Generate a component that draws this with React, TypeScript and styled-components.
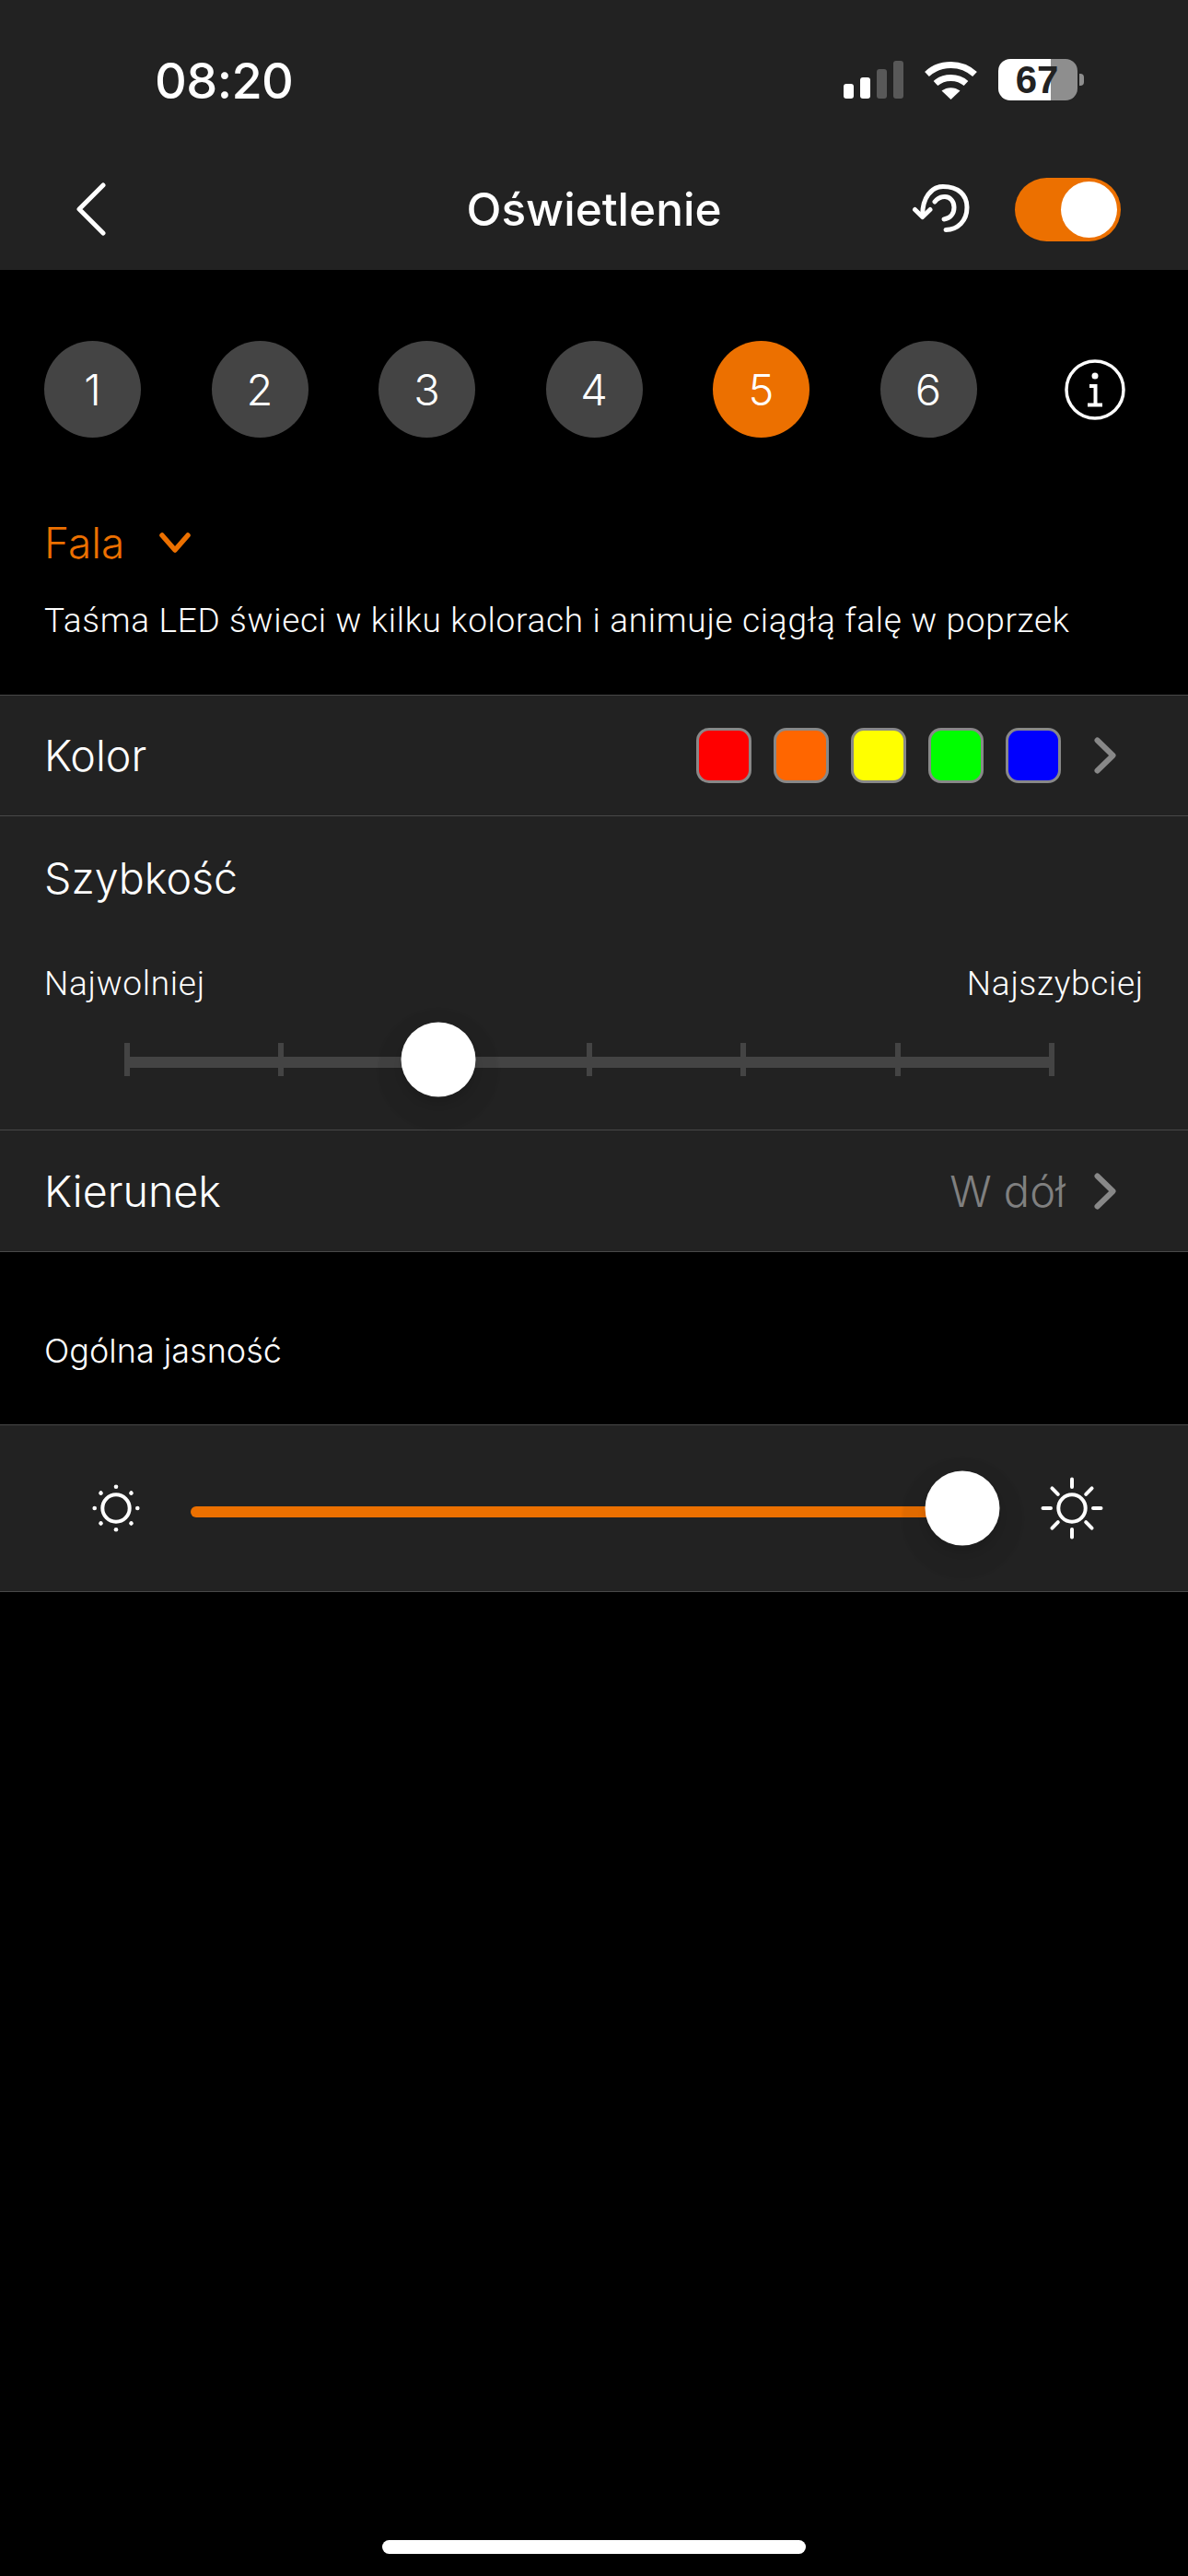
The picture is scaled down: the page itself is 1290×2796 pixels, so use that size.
import React from "react";
import styled, { createGlobalStyle } from "styled-components";

const Global = createGlobalStyle`
  html, body { margin: 0; padding: 0; background: #000; }
  body { font-family: "Inter", "Liberation Sans", sans-serif; color: #fff; }
  * { box-sizing: border-box; }
`;

const Page = styled.div`
  width: 1290px;
  height: 2796px;
  background: #000;
  display: flex;
  flex-direction: column;
  position: relative;
  overflow: hidden;
`;

const Header = styled.header`
  height: 293px;
  flex: none;
  background: #222222;
  display: flex;
  flex-direction: column;
`;

const StatusBar = styled.div`
  height: 173px;
  flex: none;
  display: flex;
  align-items: flex-start;
  justify-content: space-between;
  padding: 60px 113px 0 168px;
`;

const Clock = styled.div`
  font-size: 54px;
  line-height: 54px;
  font-weight: 500;
  margin-top: 1px;
  letter-spacing: -0.6px;
`;

const StatusIcons = styled.div`
  display: flex;
  align-items: center;
  gap: 23px;
  margin-top: 4px;
`;

const Nav = styled.div`
  height: 108px;
  display: flex;
  align-items: center;
  justify-content: space-between;
  padding: 0 73px 0 82px;
  position: relative;
`;

const Title = styled.h1`
  position: absolute;
  left: 0;
  right: 0;
  margin: 0;
  text-align: center;
  font-size: 49.5px;
  font-weight: 500;
  line-height: 54px;
`;

const NavRight = styled.div`
  display: flex;
  align-items: center;
  gap: 48px;
`;

const Toggle = styled.div`
  width: 115px;
  height: 69px;
  border-radius: 35px;
  background: #ec7000;
  display: flex;
  align-items: center;
  justify-content: flex-end;
  padding-right: 4px;
`;

const Knob = styled.div`
  width: 61px;
  height: 61px;
  border-radius: 50%;
  background: #fff;
`;

const Presets = styled.div`
  height: 189px;
  flex: none;
  margin-top: 77px;
  padding: 0 48px;
  display: flex;
  align-items: flex-start;
  justify-content: space-between;
`;

const Preset = styled.div<{ $active?: boolean }>`
  width: 105px;
  height: 105px;
  border-radius: 50%;
  background: ${(p) => (p.$active ? "#ec7000" : "#444444")};
  display: flex;
  align-items: center;
  justify-content: center;
  font-size: 47px;
  font-weight: 300;
`;

const InfoSlot = styled.div`
  width: 105px;
  height: 105px;
  display: flex;
  align-items: center;
  justify-content: center;
  transform: translateX(-1px);
`;

const Mode = styled.div`
  display: flex;
  align-items: center;
  gap: 38px;
  padding: 0 48px;
  height: 60px;
  flex: none;
  color: #ec7000;
  font-size: 46px;
  font-weight: 300;
`;

const Description = styled.p`
  margin: 30px 0 0;
  padding: 0 48px;
  flex: none;
  font-family: "Roboto", sans-serif;
  font-size: 37px;
  line-height: 50px;
  font-weight: 300;
  letter-spacing: 0.7px;
  height: 105px;
  white-space: nowrap;
`;

const Panel = styled.section`
  flex: none;
  background: #222222;
  border-top: 1px solid #484848;
  border-bottom: 1px solid #484848;
`;

const Row = styled.div<{ $h: number }>`
  height: ${(p) => p.$h}px;
  display: flex;
  align-items: center;
  justify-content: space-between;
  padding: 0 78px 0 48px;
`;

const Divider = styled.div`
  height: 1px;
  background: #484848;
`;

const RowLabel = styled.div`
  font-size: 46.6px;
  font-weight: 300;
`;

const RowValue = styled.div`
  display: flex;
  align-items: center;
  gap: 31px;
  color: #808080;
  font-size: 47px;
  font-weight: 300;
`;

const Swatches = styled.div`
  display: flex;
  align-items: center;
  gap: 24px;
  margin-right: 5px;
`;

const Swatch = styled.div<{ $c: string }>`
  width: 60px;
  height: 60px;
  border-radius: 14px;
  background: ${(p) => p.$c};
  border: 3px solid #888888;
`;

const SpeedBlock = styled.div`
  height: 340px;
  padding: 0 48px;
  display: flex;
  flex-direction: column;
`;

const SpeedTitle = styled(RowLabel)`
  margin-top: 40px;
  line-height: 54px;
`;

const SpeedEnds = styled.div`
  display: flex;
  justify-content: space-between;
  margin-top: 66px;
  font-family: "Roboto", sans-serif;
  font-size: 37px;
  line-height: 44px;
  font-weight: 300;
  letter-spacing: 0.7px;
`;

const StepTrack = styled.div`
  position: relative;
  height: 36px;
  margin: 42px 97px 0 87px;
  display: flex;
  align-items: center;
  justify-content: space-between;
  &::before {
    content: "";
    position: absolute;
    left: 0;
    right: 0;
    top: 15px;
    height: 12px;
    background: #444;
  }
`;

const Tick = styled.div`
  width: 6px;
  height: 36px;
  background: #444;
  position: relative;
`;

const Thumb = styled.div<{ $lift: number }>`
  position: absolute;
  width: 81px;
  height: 81px;
  border-radius: 50%;
  background: #fff;
  top: calc(50% - ${(p) => p.$lift}px);
  transform: translate(-50%, -50%);
  box-shadow:
    0 8px 8px rgba(0, 0, 0, 0.1),
    0 11px 3px 25px rgba(0, 0, 0, 0.05);
  z-index: 1;
`;

const Section = styled.div`
  height: 187px;
  flex: none;
  padding: 26px 48px 0;
  display: flex;
  align-items: center;
  font-size: 36px;
  font-weight: 300;
`;

const BrightnessRow = styled.div`
  height: 180px;
  display: flex;
  align-items: center;
  padding: 0 92px 0 100px;
`;

const BrightTrack = styled.div`
  position: relative;
  flex: 1;
  height: 12px;
  margin: 7px 85px 0 55px;
  background: #ec7000;
  border-radius: 6px 0 0 6px;
`;

const HomeIndicator = styled.div`
  position: absolute;
  left: 415px;
  bottom: 24px;
  width: 460px;
  height: 15px;
  border-radius: 8px;
  background: #fff;
`;

const BatteryGroup = styled.div`
  display: flex;
  align-items: center;
  gap: 2px;
`;

const BatteryBody = styled.div`
  width: 86px;
  height: 45px;
  border-radius: 13px;
  background: linear-gradient(to right, #fff 0 66.3%, #8e8e8e 66.3% 100%);
  color: #222222;
  font: 700 42px/45px "Liberation Sans", sans-serif;
  text-align: center;
  padding-right: 2px;
`;

const BatteryCap = styled.div`
  width: 5px;
  height: 13px;
  border-radius: 0 4px 4px 0;
  background: #8e8e8e;
`;

const Signal = () => (
  <svg width="65" height="41" viewBox="0 0 65 41">
    <rect x="0" y="25" width="11" height="16" rx="3" fill="#fff" />
    <rect x="18" y="18" width="11" height="23" rx="3" fill="#fff" />
    <rect x="36" y="9" width="11" height="32" rx="3" fill="#585858" />
    <rect x="54" y="0" width="11" height="41" rx="3" fill="#585858" />
  </svg>
);

const Wifi = () => (
  <svg width="57" height="42" viewBox="0 0 57 42" fill="none" stroke="#fff" strokeWidth="7">
    <path d="M2.5 14.5 C17 1 40 1 54.5 14.5" />
    <path d="M12 24.5 C21 16.5 36 16.5 45 24.5" />
    <path d="M28.5 42 L18.5 32.5 C24.5 28 32.5 28 38.5 32.5 Z" fill="#fff" stroke="none" />
  </svg>
);

const Info = () => (
  <svg width="66" height="66" viewBox="0 0 66 66" fill="none" stroke="#fff" strokeLinecap="round">
    <circle cx="33" cy="33" r="31" strokeWidth="3.5" />
    <circle cx="33" cy="18" r="3.5" fill="#fff" stroke="none" />
    <path d="M27 29 H33.5 V48 M25 49.5 H41" strokeWidth="4" strokeLinecap="butt" />
  </svg>
);

const Reset = () => (
  <svg width="64" height="56" viewBox="0 0 64 56" fill="none" stroke="#fff" strokeWidth="5" strokeLinecap="round" strokeLinejoin="round">
    <path d="M11.7 34 C11.7 16 21 3.5 34 3.5 C50 3.5 60 12 60 26 C60 41 50 50 37 50.5" />
    <path d="M25 20 C28 16 32 14.5 36 14.5 C42 14.5 46 20 46 26 C46 33 42 38 35 39" />
    <path d="M3.5 28.5 L11.7 36.5 L20 28.5" />
  </svg>
);

const SUN_ANGLES = [0, 45, 90, 135, 180, 225, 270, 315];

const SmallSun = () => (
  <svg width="52" height="52" viewBox="-26 -26 52 52" stroke="#fff" fill="none">
    <circle r="14.7" strokeWidth="4" />
    {SUN_ANGLES.map((a) => (
      <circle key={a} cx="0" cy="-23.3" r="2.3" fill="#fff" stroke="none" transform={`rotate(${a})`} />
    ))}
  </svg>
);

const BigSun = () => (
  <svg width="68" height="68" viewBox="-34 -34 68 68" stroke="#fff" fill="none" strokeLinecap="round">
    <circle r="14.7" strokeWidth="4" />
    {SUN_ANGLES.map((a) => (
      <line key={a} x1="0" y1={a % 90 === 0 ? -23 : -21.5} x2="0" y2={a % 90 === 0 ? -31.5 : -30.5} strokeWidth="4" transform={`rotate(${a})`} />
    ))}
  </svg>
);

const ChevronRight = () => (
  <svg width="24" height="40" viewBox="0 0 24 40" fill="none" stroke="#888888" strokeWidth="6" strokeLinecap="round" strokeLinejoin="round">
    <path d="M3.5 3.5 L20.5 20 L3.5 36.5" />
  </svg>
);

export default function App() {
  return (
    <Page>
      <Global />
      <Header>
        <StatusBar>
          <Clock>08:20</Clock>
          <StatusIcons>
            <Signal />
            <Wifi />
            <BatteryGroup>
              <BatteryBody>67</BatteryBody>
              <BatteryCap />
            </BatteryGroup>
          </StatusIcons>
        </StatusBar>
        <Nav>
          <svg width="34" height="58" viewBox="0 0 34 58" fill="none" stroke="#fff" strokeWidth="5" strokeLinecap="round" strokeLinejoin="round">
            <path d="M30 3 L4 29 L30 55" />
          </svg>
          <Title>Oświetlenie</Title>
          <NavRight>
            <Reset />
            <Toggle>
              <Knob />
            </Toggle>
          </NavRight>
        </Nav>
      </Header>

      <Presets>
        {[1, 2, 3, 4, 5, 6].map((n) => (
          <Preset key={n} $active={n === 5}>
            {n}
          </Preset>
        ))}
        <InfoSlot>
          <Info />
        </InfoSlot>
      </Presets>

      <Mode>
        Fala
        <svg width="34" height="22" viewBox="0 0 34 22" fill="none" stroke="#ec7000" strokeWidth="5.5" strokeLinecap="round" strokeLinejoin="round">
          <path d="M3 3 L17 19 L31 3" />
        </svg>
      </Mode>
      <Description>Taśma LED świeci w kilku kolorach i animuje ciągłą falę w poprzek</Description>

      <Panel>
        <Row $h={130}>
          <RowLabel>Kolor</RowLabel>
          <RowValue>
            <Swatches>
              {["#ff0000", "#ff6600", "#ffff00", "#00ff00", "#0000ff"].map((c) => (
                <Swatch key={c} $c={c} />
              ))}
            </Swatches>
            <ChevronRight />
          </RowValue>
        </Row>
        <Divider />
        <SpeedBlock>
          <SpeedTitle>Szybkość</SpeedTitle>
          <SpeedEnds>
            <span>Najwolniej</span>
            <span>Najszybciej</span>
          </SpeedEnds>
          <StepTrack>
            {[0, 1, 2, 3, 4, 5, 6].map((i) => (
              <Tick key={i} />
            ))}
            <Thumb $lift={0.5} style={{ left: "33.75%" }} />
          </StepTrack>
        </SpeedBlock>
        <Divider />
        <Row $h={131}>
          <RowLabel>Kierunek</RowLabel>
          <RowValue>
            W dół
            <ChevronRight />
          </RowValue>
        </Row>
      </Panel>

      <Section>Ogólna jasność</Section>

      <Panel>
        <BrightnessRow>
          <SmallSun />
          <BrightTrack>
            <Thumb $lift={3.5} style={{ left: "100%" }} />
          </BrightTrack>
          <BigSun />
        </BrightnessRow>
      </Panel>

      <HomeIndicator />
    </Page>
  );
}
